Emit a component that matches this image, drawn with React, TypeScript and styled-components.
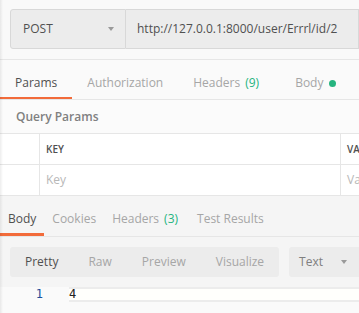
import React from "react";
import styled, { createGlobalStyle } from "styled-components";

const GlobalStyle = createGlobalStyle`
  html, body {
    margin: 0;
    padding: 0;
    background: #fafafa;
  }
  * {
    box-sizing: border-box;
  }
`;

const Page = styled.div`
  position: relative;
  width: 359px;
  height: 313px;
  overflow: hidden;
  background: #fafafa;
  font-family: "Open Sans", "Liberation Sans", sans-serif;
  font-size: 12px;
  line-height: 16px;
  color: #505050;
  &::before {
    content: "";
    position: absolute;
    top: 0;
    left: 0;
    bottom: 0;
    width: 3px;
    background: linear-gradient(to right, rgba(0, 0, 0, 0.07), rgba(0, 0, 0, 0));
    pointer-events: none;
    z-index: 2;
  }
`;

// request url bar
const UrlBar = styled.div`
  display: flex;
  padding: 9px 0 10px 10px;
  background: #f9f9f9;
  border-bottom: 1px solid #e6e6e6;
`;

const MethodSelect = styled.div`
  display: flex;
  align-items: center;
  justify-content: space-between;
  width: 116px;
  height: 40px;
  padding: 0 11px 0 12px;
  background: #ececec;
  border: 1px solid #d8d8d8;
  border-radius: 3px 0 0 3px;
`;

const UrlInput = styled.div`
  flex: 1;
  display: flex;
  align-items: center;
  height: 40px;
  padding-left: 11px;
  background: #ececec;
  border: 1px solid #d8d8d8;
  border-left: none;
  white-space: nowrap;
  overflow: hidden;
`;

const Caret = styled.span`
  width: 0;
  height: 0;
  border-left: 3.5px solid transparent;
  border-right: 3.5px solid transparent;
  border-top: 4px solid #9a9a9a;
`;

// tabs
const TabBar = styled.div<{ $bg: string }>`
  display: flex;
  background: ${(p) => p.$bg};
  border-bottom: 1px solid #e6e6e6;
  white-space: nowrap;
`;

const Tab = styled.div<{ $active?: boolean; $pad: number; $bar: number; $extra?: number }>`
  display: flex;
  align-items: center;
  padding: 15px ${(p) => p.$pad}px 6px ${(p) => p.$pad + (p.$extra || 0)}px;
  color: ${(p) => (p.$active ? "#505050" : "#a6a6a6")};
  border-bottom: ${(p) => p.$bar}px solid ${(p) => (p.$active ? "#f26b3a" : "transparent")};
`;

const Count = styled.span`
  margin-left: 5px;
  color: #26b47f;
`;

const Dot = styled.span`
  width: 7px;
  height: 7px;
  margin-left: 6px;
  border-radius: 50%;
  background: #26b47f;
`;

// query params
const SectionTitle = styled.div`
  padding: 9px 16px 8px;
  font-weight: 600;
  color: #808080;
  background: #fbfbfb;
`;

const Table = styled.div`
  background: #fff;
  border-top: 1px solid #e6e6e6;
`;

const Row = styled.div`
  display: grid;
  grid-template-columns: 40px 301px 1fr;
  height: 31px;
  border-bottom: 1px solid #e6e6e6;
`;

const Cell = styled.div<{ $head?: boolean }>`
  display: flex;
  align-items: center;
  padding-left: 6px;
  border-right: 1px solid #e6e6e6;
  white-space: nowrap;
  overflow: hidden;
  font-size: ${(p) => (p.$head ? "10px" : "12px")};
  font-weight: ${(p) => (p.$head ? 600 : 400)};
  color: ${(p) => (p.$head ? "#505050" : "#b8b8b8")};
  &:last-child {
    border-right: none;
  }
`;

// response
const Response = styled.div`
  background: #f5f5f5;
`;

const ViewBar = styled.div`
  display: flex;
  gap: 10px;
  padding: 10px 0 10px 10px;
`;

const Segmented = styled.div`
  display: flex;
  height: 30px;
  background: #ececec;
  border-radius: 3px;
`;

const Segment = styled.div<{ $active?: boolean }>`
  display: flex;
  align-items: center;
  padding: 0 15px;
  color: ${(p) => (p.$active ? "#505050" : "#a6a6a6")};
`;

const FormatSelect = styled.div`
  flex: 1;
  display: flex;
  align-items: center;
  gap: 18px;
  height: 30px;
  padding-left: 10px;
  background: #ececec;
  border-radius: 3px 0 0 3px;
  color: #808080;
`;

const Editor = styled.div`
  display: flex;
  height: 30px;
  background: #fafafa;
`;

const Gutter = styled.div`
  width: 69px;
  padding-right: 26px;
  text-align: right;
  font-family: "DejaVu Sans Mono", "Liberation Mono", monospace;
  font-size: 12px;
  line-height: 15px;
  color: #1d4f9a;
`;

const CodeLine = styled.div`
  flex: 1;
  height: 15px;
  border-top: 2px solid #ececec;
  border-bottom: 2px solid #ececec;
  background: #fffffc;
  font-family: "DejaVu Sans Mono", "Liberation Mono", monospace;
  font-size: 12px;
  line-height: 11px;
  color: #222;
`;

export default function App() {
  return (
    <Page>
      <GlobalStyle />
      <UrlBar>
        <MethodSelect>
          <span>POST</span>
          <Caret />
        </MethodSelect>
        <UrlInput>http://127.0.0.1:8000/user/Errrl/id/2</UrlInput>
      </UrlBar>

      <TabBar $bg="#fafafa">
        <Tab $active $pad={15} $bar={2}>Params</Tab>
        <Tab $pad={15} $bar={2}>Authorization</Tab>
        <Tab $pad={15} $bar={2}>
          Headers<Count>(9)</Count>
        </Tab>
        <Tab $pad={15} $bar={2} $extra={6}>
          Body<Dot />
        </Tab>
      </TabBar>

      <SectionTitle>Query Params</SectionTitle>
      <Table>
        <Row>
          <Cell />
          <Cell $head>KEY</Cell>
          <Cell $head>VALUE</Cell>
        </Row>
        <Row>
          <Cell />
          <Cell>Key</Cell>
          <Cell>Value</Cell>
        </Row>
      </Table>

      <Response>
        <TabBar $bg="#f5f5f5">
          <Tab $active $pad={8} $bar={3}>Body</Tab>
          <Tab $pad={8} $bar={3}>Cookies</Tab>
          <Tab $pad={8} $bar={3}>
            Headers<Count>(3)</Count>
          </Tab>
          <Tab $pad={8} $bar={3} $extra={3}>Test Results</Tab>
        </TabBar>
        <ViewBar>
          <Segmented>
            <Segment $active>Pretty</Segment>
            <Segment>Raw</Segment>
            <Segment>Preview</Segment>
            <Segment>Visualize</Segment>
          </Segmented>
          <FormatSelect>
            <span>Text</span>
            <Caret />
          </FormatSelect>
        </ViewBar>
        <Editor>
          <Gutter>1</Gutter>
          <CodeLine>4</CodeLine>
        </Editor>
      </Response>
    </Page>
  );
}
